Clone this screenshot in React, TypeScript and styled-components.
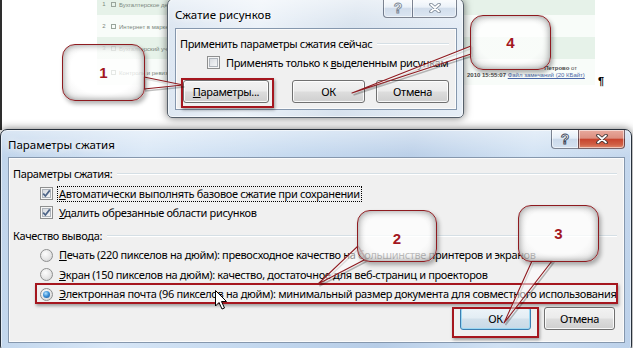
import React from "react";
import styled, { createGlobalStyle } from "styled-components";

const UI = `"Noto Sans", "Open Sans", "DejaVu Sans", sans-serif`;

const GlobalStyle = createGlobalStyle`
  html, body { margin: 0; padding: 0; background: #ffffff; }
  body { font-family: ${UI}; }
`;

const Screen = styled.div`
  position: relative;
  width: 633px;
  height: 348px;
  overflow: hidden;
  background: #ffffff;
  font-family: ${UI};
  font-size: 11px;
  letter-spacing: -0.34px;
  color: #000;
`;

/* ---------- background document ---------- */
const DocWindow = styled.div`
  position: absolute;
  left: 0;
  top: 0;
  width: 633px;
  height: 130px;
  box-sizing: border-box;
  border-left: 2px solid #2e2e2e;
  background: #fff;
  font-family: "Liberation Sans", Arial, sans-serif;
  letter-spacing: 0;
`;
const DocBody = styled.div`
  display: flex;
  align-items: flex-end;
  padding-left: 95px;
`;
const DocTable = styled.div`
  margin-top: -7px;
  width: 498px;
  display: flex;
  flex-direction: column;
`;
const DocRow = styled.div<{ $shade?: boolean; $tall?: boolean }>`
  height: ${(p) => (p.$tall ? 26 : 22)}px;
  display: flex;
  align-items: center;
  background: ${(p) => (p.$shade ? "#e6f2e9" : "#f8fcf9")};
  font-size: 6px;
  color: #7b887e;
`;
const DocNum = styled.span`
  width: 10px;
  margin-left: 2px;
  text-align: center;
`;
const DocBox = styled.span`
  width: 5px;
  height: 5px;
  margin: 0 3px 0 2px;
  box-sizing: border-box;
  border: 1px solid #9aa59c;
`;
const DocTitle = styled.span`
  margin-top: 2px;
`;
const DocNote = styled.div`
  margin-left: auto;
  width: 128px;
  display: flex;
  flex-direction: column;
  line-height: 7px;
  color: #4a4a4a;
`;
const DocNoteTop = styled.span`
  align-self: flex-end;
  margin-right: 18px;
`;
const DocLink = styled.span`
  color: #4b67a6;
  text-decoration: underline;
`;
const Pilcrow = styled.div`
  margin: 0 0 -2px 3px;
  font-size: 11px;
  font-weight: bold;
`;

/* ---------- windows ---------- */
const Win = styled.div<{ $x: number; $y: number; $w: number; $h: number; $active?: boolean }>`
  position: absolute;
  left: ${(p) => p.$x}px;
  top: ${(p) => p.$y}px;
  width: ${(p) => p.$w}px;
  height: ${(p) => p.$h}px;
  box-sizing: border-box;
  display: flex;
  flex-direction: column;
  padding: 0 6px 7px 7px;
  border: 1px solid ${(p) => (p.$active ? "#27303b" : "#56606b")};
  border-radius: 7px 7px 5px 5px;
  background: ${(p) =>
    p.$active
      ? "linear-gradient(180deg, rgba(255,255,255,0.45) 0px, rgba(255,255,255,0.05) 26px, rgba(255,255,255,0) 100%), linear-gradient(100deg, #bcd2ea 0%, #d7e6f6 22%, #c2d7ee 45%, #b7cde7 62%, #d0e1f3 80%, #bcd1ea 100%)"
      : "linear-gradient(180deg, rgba(255,255,255,0.55) 0px, rgba(255,255,255,0.15) 26px, rgba(255,255,255,0.1) 100%), linear-gradient(100deg, #d6e2ef 0%, #e9f0f8 30%, #d3dfec 60%, #e3ecf6 100%)"};
  box-shadow: inset 0 0 0 1px rgba(255, 255, 255, 0.55), 0 0 9px rgba(0, 0, 0, 0.55);
`;
const TitleBar = styled.div<{ $h: number }>`
  height: ${(p) => p.$h}px;
  flex: none;
  display: flex;
  align-items: flex-start;
  justify-content: space-between;
`;
const TitleText = styled.div<{ $pt: number }>`
  padding-top: ${(p) => p.$pt}px;
  line-height: 16px;
  font-size: 11.5px;
  letter-spacing: 0;
  text-shadow: 0 0 6px rgba(255, 255, 255, 0.95), 0 0 10px rgba(255, 255, 255, 0.8);
`;
const CaptionGroup = styled.div<{ $h: number }>`
  display: flex;
  height: ${(p) => p.$h}px;
`;
const CapBtn = styled.div<{ $w: number; $kind: "help" | "close" | "closeHot"; $edge: "l" | "r" }>`
  width: ${(p) => p.$w}px;
  height: 100%;
  box-sizing: border-box;
  border: 1px solid rgba(45, 55, 75, 0.6);
  border-top: none;
  ${(p) => (p.$edge === "l" ? "border-right: none; border-radius: 0 0 0 4px;" : "border-radius: 0 0 4px 0;")}
  background: ${(p) =>
    p.$kind === "closeHot"
      ? "linear-gradient(180deg, #e8aa9e 0%, #dc8f80 45%, #c8452f 52%, #cf5f45 80%, #e08a6e 100%)"
      : "linear-gradient(180deg, rgba(255,255,255,0.75) 0%, rgba(236,242,249,0.55) 45%, rgba(190,206,226,0.55) 52%, rgba(214,226,240,0.6) 100%)"};
  box-shadow: inset 0 0 0 1px rgba(255, 255, 255, 0.55);
  display: flex;
  align-items: center;
  justify-content: center;
`;
const HelpGlyph = styled.span<{ $dim?: boolean }>`
  font-family: "Liberation Sans", Arial, sans-serif;
  font-size: 14px;
  font-weight: bold;
  letter-spacing: 0;
  line-height: 14px;
  color: #fff;
  -webkit-text-stroke: 0.9px ${(p) => (p.$dim ? "#7b8796" : "#3d4a5c")};
`;

const CloseGlyph: React.FC<{ dim?: boolean }> = ({ dim }) => (
  <svg width="12" height="10" viewBox="0 0 12 10">
    <path d="M2 1.5 L10 8.5 M10 1.5 L2 8.5" stroke={dim ? "#7b8796" : "#3a3030"} strokeWidth="3.6" strokeLinecap="round" fill="none" />
    <path d="M2 1.5 L10 8.5 M10 1.5 L2 8.5" stroke="#ffffff" strokeWidth="1.8" strokeLinecap="round" fill="none" />
  </svg>
);

const Panel = styled.div`
  flex: 1;
  display: flex;
  flex-direction: column;
  background: #f0f0f0;
  border: 1px solid #8597ad;
  box-shadow: inset 0 0 0 1px #fbfbfb;
`;
const GroupHeader = styled.div<{ $mt: number }>`
  margin: ${(p) => p.$mt}px 7px 0 4px;
  height: 16px;
  display: flex;
  align-items: center;
  gap: 5px;
  &::after {
    content: "";
    flex: 1;
    height: 1px;
    background: #d5dfe5;
    box-shadow: 0 1px 0 #ffffff;
  }
`;
const OptionRow = styled.div<{ $h: number; $mt?: number; $indent: number }>`
  height: ${(p) => p.$h}px;
  margin-top: ${(p) => p.$mt ?? 0}px;
  padding-left: ${(p) => p.$indent}px;
  display: flex;
  align-items: center;
  gap: 5px;
`;
const OptionLabel = styled.span<{ $focus?: boolean }>`
  padding: 0 1px;
  line-height: 14px;
  white-space: nowrap;
  outline: ${(p) => (p.$focus ? "1px dotted #000" : "none")};
  outline-offset: 0;
`;
const CheckBox = styled.span`
  flex: none;
  width: 13px;
  height: 13px;
  box-sizing: border-box;
  border: 1px solid #8e8f8f;
  background: linear-gradient(135deg, #cfd3d8 0%, #e9ebee 55%, #fafafa 100%);
  box-shadow: inset 0 0 0 1px #f6f6f6, inset 0 0 0 2px #aeb4bb;
  display: flex;
  align-items: center;
  justify-content: center;
`;
const CheckMark = () => (
  <svg width="9" height="9" viewBox="0 0 9 9">
    <path d="M1.2 4.6 L3.4 7 L7.8 1.4" stroke="#4d6487" strokeWidth="1.7" fill="none" />
  </svg>
);
const Radio = styled.span<{ $on?: boolean }>`
  flex: none;
  width: 13px;
  height: 13px;
  box-sizing: border-box;
  border-radius: 50%;
  border: 1px solid #8e8f8f;
  background: radial-gradient(circle at 40% 35%, #fdfdfd 0%, #e6e6e6 55%, #c9cbcd 100%);
  display: flex;
  align-items: center;
  justify-content: center;
  &::after {
    content: "";
    display: ${(p) => (p.$on ? "block" : "none")};
    width: 7px;
    height: 7px;
    border-radius: 50%;
    background: radial-gradient(circle at 40% 35%, #b4e2ff 0%, #3f93d8 45%, #124f98 100%);
  }
`;
const ButtonRow = styled.div<{ $mt: number; $pl: number; $pr: number; $gap: number }>`
  margin-top: ${(p) => p.$mt}px;
  padding: 0 ${(p) => p.$pr}px 0 ${(p) => p.$pl}px;
  display: flex;
  gap: ${(p) => p.$gap}px;
`;
const Spacer = styled.div`
  flex: 1;
`;
const Button = styled.div<{ $w: number; $default?: boolean }>`
  flex: none;
  width: ${(p) => p.$w}px;
  height: 23px;
  box-sizing: border-box;
  border: 1px solid ${(p) => (p.$default ? "#3c7fb1" : "#707070")};
  border-radius: 3px;
  background: ${(p) =>
    p.$default
      ? "linear-gradient(180deg, #edf4f9 0%, #e3edf4 48%, #d3e1eb 52%, #c8d9e6 100%)"
      : "linear-gradient(180deg, #f2f2f2 0%, #ebebeb 48%, #dddddd 52%, #cfcfcf 100%)"};
  box-shadow: inset 0 0 0 1px ${(p) => (p.$default ? "#9bd7f2" : "rgba(255,255,255,0.85)")};
  display: flex;
  align-items: center;
  justify-content: center;
  white-space: nowrap;
`;

/* ---------- annotations ---------- */
const Highlight = styled.div<{ $x: number; $y: number; $w: number; $h: number }>`
  position: absolute;
  left: ${(p) => p.$x}px;
  top: ${(p) => p.$y}px;
  width: ${(p) => p.$w}px;
  height: ${(p) => p.$h}px;
  box-sizing: border-box;
  border: 2.5px solid #a5161e;
  box-shadow: 1px 2px 3px rgba(0, 0, 0, 0.35);
`;
const Callout = styled.div<{ $x: number; $y: number; $w: number; $h: number; $dy?: number }>`
  position: absolute;
  left: ${(p) => p.$x}px;
  top: ${(p) => p.$y}px;
  width: ${(p) => p.$w}px;
  height: ${(p) => p.$h}px;
  box-sizing: border-box;
  border: 1.5px solid #8f1b20;
  border-radius: 13px;
  background: radial-gradient(ellipse at 50% 45%, rgba(255,255,255,0.74) 58%, rgba(238,238,238,0.74) 82%, rgba(190,190,190,0.78) 100%);
  box-shadow: inset 0 0 7px rgba(0, 0, 0, 0.42), 2px 3px 4px rgba(0, 0, 0, 0.3);
  display: flex;
  align-items: center;
  justify-content: center;
  padding-top: ${(p) => p.$dy ?? 0}px;
  font-family: "Liberation Sans", Arial, sans-serif;
  font-weight: bold;
  font-size: 15px;
  letter-spacing: 0;
  color: #a3171f;
`;
const Overlay = styled.svg`
  position: absolute;
  left: 0;
  top: 0;
  pointer-events: none;
`;

const tails: string[] = [
  "144,77 183,85 144,89",
  "471,46 352,93 471,54",
  "358,246 318,284 366,259",
  "532,261 504,323 552,261",
];

export default function App() {
  return (
    <Screen>
      <GlobalStyle />

      <DocWindow>
        <DocBody>
          <DocTable>
            <DocRow $shade>
              <DocNum>1</DocNum>
              <DocBox />
              <DocTitle>Бухгалтерское дело</DocTitle>
            </DocRow>
            <DocRow>
              <DocNum>2</DocNum>
              <DocBox />
              <DocTitle>Интернет в маркетинге</DocTitle>
            </DocRow>
            <DocRow $shade>
              <DocNum>3</DocNum>
              <DocBox />
              <DocTitle>Бухгалтерский учет</DocTitle>
            </DocRow>
            <DocRow $tall>
              <DocNum>4</DocNum>
              <DocBox />
              <DocTitle>Контроль и ревизия</DocTitle>
              <DocNote>
                <DocNoteTop>
                  <b>Петрово</b> от
                </DocNoteTop>
                <span>
                  <b>2010 15:55:07</b> <DocLink>Файл замечаний (20 КБайт)</DocLink>
                </span>
              </DocNote>
            </DocRow>
          </DocTable>
          <Pilcrow>¶</Pilcrow>
        </DocBody>
      </DocWindow>

      <Win $x={167} $y={-2} $w={297} $h={120}>
        <TitleBar $h={29}>
          <TitleText $pt={8}>Сжатие рисунков</TitleText>
          <CaptionGroup $h={19}>
            <CapBtn $w={29} $kind="help" $edge="l">
              <HelpGlyph $dim>?</HelpGlyph>
            </CapBtn>
            <CapBtn $w={45} $kind="close" $edge="r">
              <CloseGlyph dim />
            </CapBtn>
          </CaptionGroup>
        </TitleBar>
        <Panel>
          <GroupHeader $mt={6}>Применить параметры сжатия сейчас</GroupHeader>
          <OptionRow $h={19} $mt={2} $indent={31}>
            <CheckBox />
            <OptionLabel>
              Применять только к <u>в</u>ыделенным рисункам
            </OptionLabel>
          </OptionRow>
          <ButtonRow $mt={8} $pl={7} $pr={7} $gap={11}>
            <Button $w={86}>
              <u>П</u>араметры...
            </Button>
            <Spacer />
            <Button $w={73}>ОК</Button>
            <Button $w={73}>Отмена</Button>
          </ButtonRow>
        </Panel>
      </Win>

      <Win $x={0} $y={129} $w={632} $h={222} $active>
        <TitleBar $h={27}>
          <TitleText $pt={7}>Параметры сжатия</TitleText>
          <CaptionGroup $h={19}>
            <CapBtn $w={27} $kind="help" $edge="l">
              <HelpGlyph>?</HelpGlyph>
            </CapBtn>
            <CapBtn $w={47} $kind="closeHot" $edge="r">
              <CloseGlyph />
            </CapBtn>
          </CaptionGroup>
        </TitleBar>
        <Panel>
          <GroupHeader $mt={7}>Параметры сжатия:</GroupHeader>
          <OptionRow $h={19} $mt={3} $indent={31}>
            <CheckBox>
              <CheckMark />
            </CheckBox>
            <OptionLabel $focus>
              <u>А</u>втоматически выполнять базовое сжатие при сохранении
            </OptionLabel>
          </OptionRow>
          <OptionRow $h={19} $indent={31}>
            <CheckBox>
              <CheckMark />
            </CheckBox>
            <OptionLabel>
              <u>У</u>далить обрезанные области рисунков
            </OptionLabel>
          </OptionRow>
          <GroupHeader $mt={5}>Качество вывода:</GroupHeader>
          <OptionRow $h={19.5} $mt={2.5} $indent={31}>
            <Radio />
            <OptionLabel>
              <u>П</u>ечать (220 пикселов на дюйм): превосходное качество на большинстве принтеров и экранов
            </OptionLabel>
          </OptionRow>
          <OptionRow $h={19.5} $indent={31}>
            <Radio />
            <OptionLabel>
              <u>Э</u>кран (150 пикселов на дюйм): качество, достаточное для веб-страниц и проекторов
            </OptionLabel>
          </OptionRow>
          <OptionRow $h={19.5} $indent={31}>
            <Radio $on />
            <OptionLabel>
              <u>Э</u>лектронная почта (96 пикселов на дюйм): минимальный размер документа для совместного использования
            </OptionLabel>
          </OptionRow>
          <ButtonRow $mt={3} $pl={7} $pr={9} $gap={13}>
            <Spacer />
            <Button $w={71} $default>
              ОК
            </Button>
            <Button $w={71}>Отмена</Button>
          </ButtonRow>
        </Panel>
      </Win>

      <Highlight $x={181} $y={78} $w={93} $h={30} />
      <Highlight $x={35} $y={283} $w={583} $h={21} />
      <Highlight $x={452} $y={307} $w={87} $h={31} />

      <Overlay width="633" height="348" viewBox="0 0 633 348">
        {tails.map((pts, i) => (
          <g key={i}>
            <polygon points={pts} transform="translate(1.5,2)" fill="none" stroke="rgba(0,0,0,0.25)" strokeWidth="1.5" />
            <polygon points={pts} fill="rgba(255,255,255,0.55)" stroke="#8f1b20" strokeWidth="1.1" strokeLinejoin="round" />
          </g>
        ))}
      </Overlay>

      <Callout $x={62} $y={44} $w={83} $h={57}>1</Callout>
      <Callout $x={470} $y={15} $w={81} $h={55}>4</Callout>
      <Callout $x={357} $y={210} $w={80} $h={52} $dy={4}>2</Callout>
      <Callout $x={518} $y={205} $w={81} $h={57}>3</Callout>

      <Overlay width="633" height="348" viewBox="0 0 633 348">
        <path
          d="M215.5 290.5 L215.5 306 L219 302.5 L222 309 L224.5 308 L221.5 301.5 L226.5 301.5 Z"
          fill="#ffffff"
          stroke="#000000"
          strokeWidth="1"
          strokeLinejoin="round"
        />
      </Overlay>
    </Screen>
  );
}
